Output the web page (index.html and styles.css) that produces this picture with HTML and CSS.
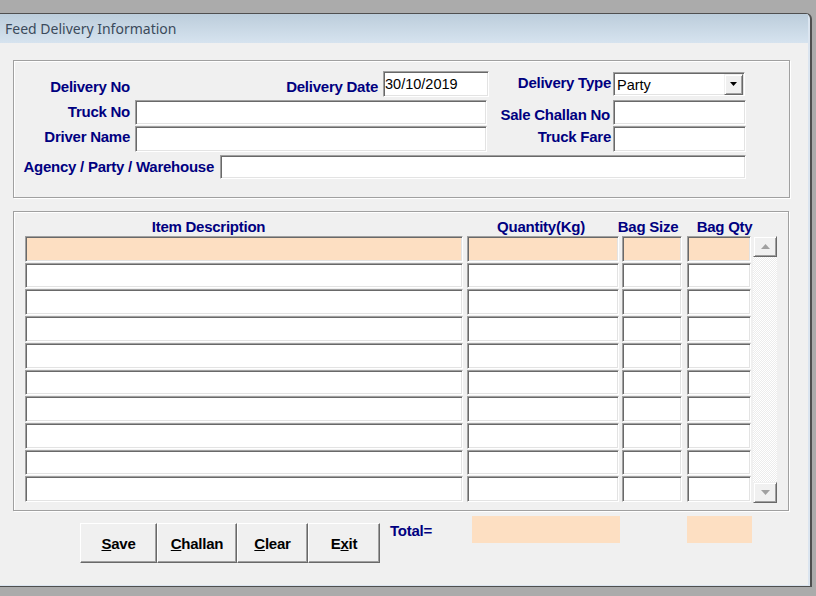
FILE: index.html
```html
<!DOCTYPE html>
<html>
<head>
<meta charset="utf-8">
<title>Feed Delivery Information</title>
<link rel="stylesheet" href="styles.css">
</head>
<body>
<div class="window">
  <div class="titlebar">Feed Delivery Information</div>
  <div class="client">
    <div class="group info">
      <div class="info-grid">
        <div class="lbl la r1a">Delivery No</div>
        <div class="date-cell">
          <span class="lbl r1a">Delivery Date</span>
          <div class="field date">30/10/2019</div>
        </div>
        <div class="lbl ld r1b">Delivery Type</div>
        <div class="field select">
          <span class="sel-text">Party</span>
          <span class="drop"><svg width="8" height="4" viewBox="0 0 8 4"><polygon points="0,0 7,0 3.5,4" fill="#000"/></svg></span>
        </div>

        <div class="lbl la r2a">Truck No</div>
        <div class="field wide"></div>
        <div class="lbl ld r2b">Sale Challan No</div>
        <div class="field"></div>

        <div class="lbl la r3">Driver Name</div>
        <div class="field wide r3f"></div>
        <div class="lbl ld r3">Truck Fare</div>
        <div class="field r3f"></div>
      </div>
      <div class="agency-row">
        <span class="lbl">Agency / Party / Warehouse</span>
        <div class="field"></div>
      </div>
    </div>

    <div class="group items">
      <div class="col c-desc">
        <div class="hdr">Item Description</div>
        <div class="cells">
          <div class="cell hl"></div><div class="cell"></div><div class="cell"></div><div class="cell"></div><div class="cell"></div>
          <div class="cell"></div><div class="cell"></div><div class="cell"></div><div class="cell"></div><div class="cell"></div>
        </div>
      </div>
      <div class="col c-qty">
        <div class="hdr">Quantity(Kg)</div>
        <div class="cells">
          <div class="cell hl"></div><div class="cell"></div><div class="cell"></div><div class="cell"></div><div class="cell"></div>
          <div class="cell"></div><div class="cell"></div><div class="cell"></div><div class="cell"></div><div class="cell"></div>
        </div>
      </div>
      <div class="col c-size">
        <div class="hdr">Bag Size</div>
        <div class="cells">
          <div class="cell hl"></div><div class="cell"></div><div class="cell"></div><div class="cell"></div><div class="cell"></div>
          <div class="cell"></div><div class="cell"></div><div class="cell"></div><div class="cell"></div><div class="cell"></div>
        </div>
      </div>
      <div class="col c-bqty">
        <div class="hdr">Bag Qty</div>
        <div class="cells">
          <div class="cell hl"></div><div class="cell"></div><div class="cell"></div><div class="cell"></div><div class="cell"></div>
          <div class="cell"></div><div class="cell"></div><div class="cell"></div><div class="cell"></div><div class="cell"></div>
        </div>
      </div>
      <div class="col c-sbar">
        <div class="hdr"></div>
        <div class="sbar">
          <div class="sbtn"><svg width="9" height="5" viewBox="0 0 9 5"><polygon points="0,5 9,5 4.5,0" fill="#a0a0a0"/></svg></div>
          <div class="track"></div>
          <div class="sbtn"><svg width="9" height="5" viewBox="0 0 9 5"><polygon points="0,0 9,0 4.5,5" fill="#a0a0a0"/></svg></div>
        </div>
      </div>
    </div>

    <div class="footer">
      <div class="buttons">
        <div class="btn b-save"><span><u>S</u>ave</span></div>
        <div class="btn b-challan"><span><u>C</u>hallan</span></div>
        <div class="btn b-clear"><span><u>C</u>lear</span></div>
        <div class="btn b-exit"><span>E<u>x</u>it</span></div>
      </div>
      <div class="lbl total-lbl">Total=</div>
      <div class="total t1"></div>
      <div class="total t2"></div>
    </div>
  </div>
</div>
</body>
</html>
```

FILE: styles.css
```css
* { box-sizing: border-box; }
html, body { margin: 0; padding: 0; }
body {
  background: #ababab;
  width: 816px;
  height: 596px;
  overflow: hidden;
  font-family: "Liberation Sans", Arial, sans-serif;
}

.window {
  margin-top: 13px;
  width: 812px;
  height: 574px;
  border-top: 1px solid #4f4f4f;
  border-right: 2px solid #4f4f4f;
  border-bottom: 1px solid #4f4f4f;
  border-top-right-radius: 6px;
  background: #dbe5f0;
  padding-right: 2px;
  padding-bottom: 1px;
  display: flex;
  flex-direction: column;
  overflow: hidden;
}

.titlebar {
  height: 29px;
  flex: none;
  background: linear-gradient(#bccddb, #d6e3ef);
  padding-left: 5px;
  font-family: "Noto Sans", "Open Sans", sans-serif;
  font-size: 14px;
  line-height: 29px;
  color: #3b4a5b;
  white-space: nowrap;
}

.client {
  flex: 1;
  background: #f0f0f0;
  padding: 17px 0 0 13px;
  display: flex;
  flex-direction: column;
}

.group {
  border: 1px solid #a0a0a0;
  box-shadow: inset 1px 1px 0 #fff, 1px 1px 0 #fff;
}

.lbl {
  font-weight: bold;
  font-size: 15px;
  letter-spacing: -0.25px;
  line-height: 17px;
  color: #000080;
  white-space: nowrap;
}

.field {
  background: #fff;
  border-top: 1px solid #a0a0a0;
  border-left: 1px solid #a0a0a0;
  border-right: 1px solid #fff;
  border-bottom: 1px solid #fff;
  box-shadow: inset 1px 1px 0 #696969, inset -1px -1px 0 #e3e3e3;
}

/* ---- info group ---- */
.info {
  width: 777px;
  height: 138px;
  padding-top: 10px;
}

.info-grid {
  display: grid;
  grid-template-columns: 121px 352px 126px 133px;
  grid-template-rows: 29px 26px 26px;
}

.la { text-align: right; padding-right: 5px; align-self: start; }
.ld { text-align: right; padding-right: 2px; align-self: start; }
.r1a { margin-top: 7px; }
.r1b { margin-top: 3px; }
.r2a { margin-top: 3px; }
.r2b { margin-top: 6px; }
.r3 { margin-top: 2px; }
.ld.r2b { padding-right: 3px; }

.info-grid .field { height: 25px; }
.info-grid .field.r3f { height: 26px; }

.date-cell {
  display: flex;
  justify-content: flex-end;
  align-items: flex-start;
  gap: 5px;
  margin-right: -2px;
}
.field.date {
  width: 106px;
  height: 26px;
  font-size: 14.5px;
  line-height: 24px;
  padding-left: 1px;
  color: #000;
}

.field.select {
  margin-top: 1px;
  height: 24px;
  width: 132px;
  display: flex;
  align-items: center;
  justify-content: space-between;
  padding: 1px 1px 1px 3px;
}
.sel-text { font-size: 14.5px; color: #000; line-height: 20px; margin-top: 1px; }
.drop {
  width: 19px;
  height: 21px;
  background: #f0f0f0;
  border-top: 1px solid #f0f0f0;
  border-left: 1px solid #f0f0f0;
  border-right: 1px solid #696969;
  border-bottom: 1px solid #696969;
  box-shadow: inset 1px 1px 0 #fff, inset -1px -1px 0 #a0a0a0;
  display: flex;
  align-items: center;
  justify-content: center;
}

.agency-row {
  margin-top: 3px;
  display: grid;
  grid-template-columns: 206px 526px;
  height: 24px;
}
.agency-row .lbl { text-align: right; padding-right: 6px; margin-top: 3px; }

/* ---- items group ---- */
.items {
  margin-top: 13px;
  width: 776px;
  height: 300px;
  padding-left: 11px;
  display: flex;
}

.col { display: flex; flex-direction: column; }
.c-desc { width: 438px; }
.c-qty { width: 152px; margin-left: 4px; }
.c-size { width: 60px; margin-left: 3px; }
.c-bqty { width: 64px; margin-left: 5px; }
.c-sbar { width: 24px; margin-left: 2px; }

.hdr {
  height: 24px;
  padding-top: 6px;
  display: flex;
  justify-content: center;
  font-weight: bold;
  font-size: 15px;
  letter-spacing: -0.25px;
  line-height: 17px;
  color: #000080;
  white-space: nowrap;
}
.c-desc .hdr { padding-right: 71px; }
.c-qty .hdr { padding-right: 4px; }
.c-size .hdr { padding-right: 8px; }
.c-bqty .hdr { padding-left: 11px; }

.cells {
  height: 266px;
  display: flex;
  flex-direction: column;
  gap: 1px;
}
.cell {
  flex: 1;
  background: #fff;
  border-top: 1px solid #a0a0a0;
  border-left: 1px solid #a0a0a0;
  border-right: 1px solid #fff;
  border-bottom: 1px solid #fff;
  box-shadow: inset 1px 1px 0 #696969, inset -1px -1px 0 #e3e3e3;
}
.cell.hl { background: #fddfc2; }

.sbar {
  height: 267px;
  display: flex;
  flex-direction: column;
  background: repeating-conic-gradient(#ffffff 0 25%, #ececec 0 50%) 0 0 / 2px 2px;
}
.track { flex: 1; }
.sbtn {
  height: 21px;
  background: #f0f0f0;
  border-top: 1px solid #f0f0f0;
  border-left: 1px solid #f0f0f0;
  border-right: 1px solid #696969;
  border-bottom: 1px solid #696969;
  box-shadow: inset 1px 1px 0 #fff, inset -1px -1px 0 #a0a0a0;
  display: flex;
  align-items: center;
  justify-content: center;
}

/* ---- footer ---- */
.footer {
  margin-top: 5px;
  display: flex;
  align-items: flex-start;
}
.buttons {
  margin-left: 67px;
  margin-top: 7px;
  display: flex;
}
.btn {
  height: 40px;
  background: #f0f0f0;
  border-top: 1px solid #fff;
  border-left: 1px solid #fff;
  border-right: 1px solid #696969;
  border-bottom: 1px solid #696969;
  box-shadow: inset -1px -1px 0 #a0a0a0;
  display: flex;
  align-items: center;
  justify-content: center;
  font-weight: bold;
  font-size: 15px;
  letter-spacing: -0.25px;
  color: #000;
}
.b-save { width: 77px; }
.b-challan { width: 80px; }
.b-clear { width: 71px; }
.b-exit { width: 72px; }

.total-lbl {
  width: 92px;
  padding-left: 10px;
  margin-top: 6px;
}
.total {
  height: 27px;
  background: #fddfc2;
}
.t1 { width: 148px; }
.t2 { width: 65px; margin-left: 67px; }
```
